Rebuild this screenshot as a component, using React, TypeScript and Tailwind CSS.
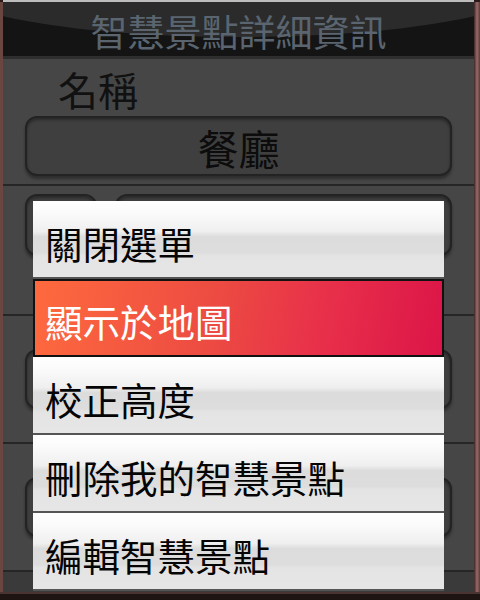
import React from "react";

const items = ["關閉選單", "顯示於地圖", "校正高度", "刪除我的智慧景點", "編輯智慧景點"];

// Rounded dark field box of the (dimmed) dialog behind the menu.
function Field({ className = "", children }: { className?: string; children?: React.ReactNode }) {
  return (
    <div
      className={`rounded-[12px] border-2 border-[#232323] bg-[#3f3f3f] shadow-[inset_0_2px_3px_rgba(0,0,0,0.35),0_3px_3px_rgba(0,0,0,0.35)] flex items-center justify-center ${className}`}
    >
      {children}
    </div>
  );
}

export default function App() {
  return (
    <div
      className="relative w-[480px] h-[600px] overflow-hidden bg-[#2a1a18] flex flex-col"
      style={{ fontFamily: '"Noto Sans CJK TC", "Noto Sans CJK SC", sans-serif' }}
    >
      {/* frame edges */}
      <div className="h-[2px] bg-[#bdbdbd] ml-[3px] mr-[6px]" />
      <div className="flex-1 flex">
        <div className="w-[3px] bg-[#6b4640]" />
        {/* dialog */}
        <div className="flex-1 flex flex-col bg-[#464646]">
          {/* title bar */}
          <div className="relative h-[54px] bg-[#141414] flex items-center justify-center">
            <div className="absolute inset-0 overflow-hidden">
              <div className="absolute left-[-60px] right-[-60px] top-[-70px] h-[105px] rounded-[50%] bg-[#2b2b2b]" />
            </div>
            <span className="relative text-[37px] leading-[44px] text-[#5a6570] mt-[4px]">智慧景點詳細資訊</span>
          </div>
          <div className="h-[3px] bg-[#2e2e2e]" />

          <div className="h-[57px] flex items-center pl-[55px]">
            <span className="text-[40px] leading-none text-[#111] mt-[2px]">名稱</span>
          </div>
          <div className="px-[22px]">
            <Field className="h-[60px]">
              <span className="text-[41px] leading-none text-[#0c0c0c] mt-[2px]">餐廳</span>
            </Field>
          </div>
          <div className="h-[8px]" />
          <div className="h-[2px] bg-[#262626]" />

          <div className="flex gap-[18px] px-[22px] pt-[8px] h-[128px]">
            <Field className="w-[72px] h-[62px]" />
            <Field className="flex-1 h-[62px]" />
          </div>
          <div className="h-[2px] bg-[#262626]" />

          <div className="h-[126px] px-[22px] flex items-center">
            <Field className="flex-1 h-[60px]" />
          </div>
          <div className="h-[2px] bg-[#262626]" />

          <div className="h-[126px] px-[22px] flex items-center">
            <Field className="flex-1 h-[60px]" />
          </div>
          <div className="h-[2px] bg-[#262626]" />
          <div className="flex-1 bg-[#3a3a3a]" />
        </div>
        <div className="w-[6px] bg-[linear-gradient(90deg,#3a2826,#9a6a68,#5a3a38)]" />
      </div>
      <div className="h-[8px] bg-[#1e1412] border-t-2 border-[#4a3432]" />

      {/* context menu */}
      <div className="absolute left-[33px] top-[201px] w-[411px] flex flex-col">
        {items.map((label, i) =>
          i === 1 ? (
            <div
              key={label}
              className="h-[78px] border-2 border-[#111] bg-[linear-gradient(100deg,#fe6a3e,#ec4a42_45%,#e8304a_70%,#dc1548)] flex items-center pl-[10px]"
            >
              <span className="text-[37.5px] leading-none text-white mt-[6px]">{label}</span>
            </div>
          ) : (
            <div
              key={label}
              className="h-[78px] border-b-2 border-[#555] bg-[linear-gradient(180deg,#ffffff_0%,#fbfbfb_15%,#f0eff0_40%,#dcdcdc_47%,#dddddd_68%,#e5e4e5_72%,#e6e6e6_100%)] flex items-center pl-[12px]"
            >
              <span className="text-[37.5px] leading-none text-[#050505] mt-[8px]">{label}</span>
            </div>
          )
        )}
      </div>
    </div>
  );
}
